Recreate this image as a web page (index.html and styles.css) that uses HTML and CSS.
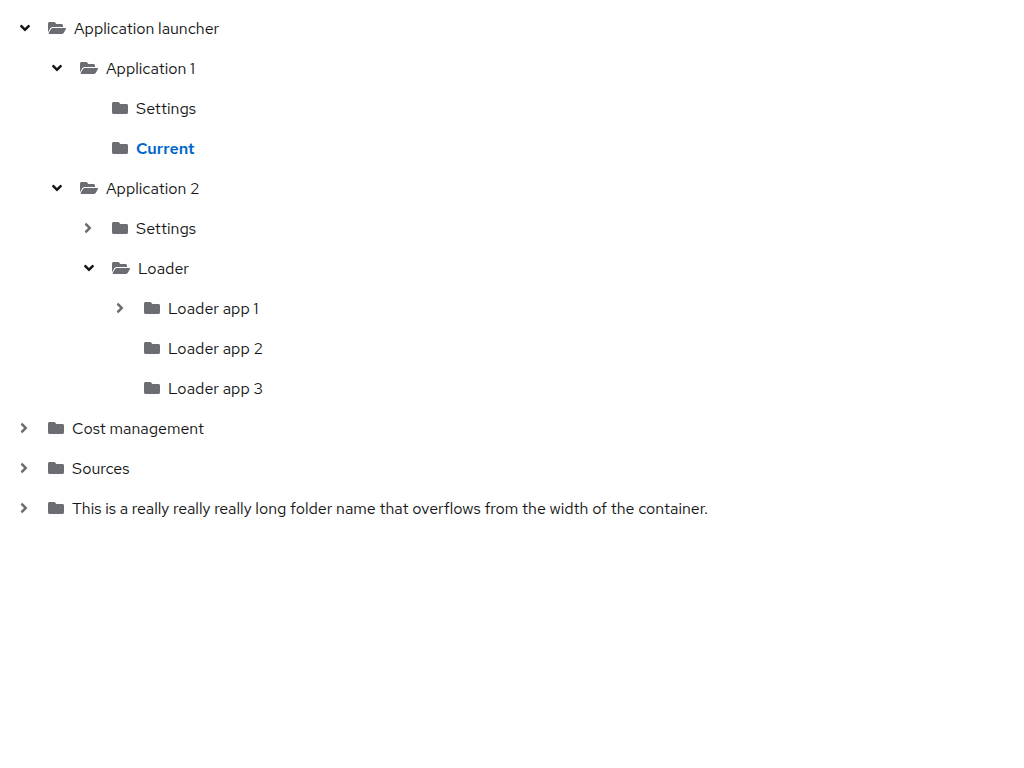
FILE: index.html
```html
<!DOCTYPE html>
<html lang="en">
<head>
<meta charset="utf-8">
<meta name="viewport" content="width=device-width, initial-scale=1">
<title>Tree view</title>
<link rel="stylesheet" href="styles.css">
</head>
<body>
<svg class="sprite" aria-hidden="true">
  <symbol id="right" viewBox="0 0 256 512"><path d="M224.3 273l-136 136c-9.400 9.400-24.600 9.400-33.900 0l-22.600-22.600c-9.400-9.400-9.400-24.600 0-33.900l96.400-96.400-96.400-96.400c-9.400-9.400-9.400-24.600 0-33.900L54.300 103c9.400-9.400 24.600-9.400 33.900 0l136 136c9.500 9.400 9.500 24.600.1 34z"/></symbol>
  <symbol id="down" viewBox="0 0 320 512"><path d="M143 352.300L7 216.300c-9.400-9.400-9.400-24.600 0-33.900l22.600-22.600c9.400-9.400 24.600-9.400 33.900 0l96.400 96.400 96.400-96.400c9.400-9.400 24.600-9.400 33.900 0l22.600 22.600c9.400 9.400 9.400 24.600 0 33.900l-136 136c-9.200 9.400-24.400 9.400-33.800 0z"/></symbol>
  <symbol id="folder" viewBox="0 0 512 512"><path d="M464 128H272l-64-64H48C21.490 64 0 85.490 0 112v288c0 26.510 21.490 48 48 48h416c26.510 0 48-21.490 48-48V176c0-26.510-21.490-48-48-48z"/></symbol>
  <symbol id="open" viewBox="0 0 576 512"><path d="M572.694 292.093L500.270 416.248A63.997 63.997 0 0 1 444.989 448H45.025c-18.523 0-30.064-20.093-20.731-36.093l72.424-124.155A64 64 0 0 1 152 256h399.964c18.523 0 30.064 20.093 20.730 36.093zM152 224h328v-48c0-26.510-21.490-48-48-48H272l-64-64H48C21.490 64 0 85.490 0 112v278.046l69.077-118.418C86.214 242.250 117.989 224 152 224z"/></symbol>
</svg>
<main>
<ul class="tree" role="tree" aria-label="Folders">
  <li role="treeitem" aria-expanded="true">
    <button class="node"><span class="toggle open"><svg class="down"><use href="#down"/></svg></span><svg class="wide"><use href="#open"/></svg><span class="label">Application launcher</span></button>
    <ul role="group">
      <li role="treeitem" aria-expanded="true">
        <button class="node"><span class="toggle open"><svg class="down"><use href="#down"/></svg></span><svg class="wide"><use href="#open"/></svg><span class="label">Application 1</span></button>
        <ul role="group">
          <li role="treeitem"><button class="node"><span class="toggle"></span><svg class="folder"><use href="#folder"/></svg><span class="label">Settings</span></button></li>
          <li role="treeitem" aria-selected="true"><button class="node current"><span class="toggle"></span><svg class="folder"><use href="#folder"/></svg><span class="label">Current</span></button></li>
        </ul>
      </li>
      <li role="treeitem" aria-expanded="true">
        <button class="node"><span class="toggle open"><svg class="down"><use href="#down"/></svg></span><svg class="wide"><use href="#open"/></svg><span class="label">Application 2</span></button>
        <ul role="group">
          <li role="treeitem" aria-expanded="false"><button class="node"><span class="toggle"><svg class="right"><use href="#right"/></svg></span><svg class="folder"><use href="#folder"/></svg><span class="label">Settings</span></button></li>
          <li role="treeitem" aria-expanded="true">
            <button class="node"><span class="toggle open"><svg class="down"><use href="#down"/></svg></span><svg class="wide"><use href="#open"/></svg><span class="label">Loader</span></button>
            <ul role="group">
              <li role="treeitem" aria-expanded="false"><button class="node"><span class="toggle"><svg class="right"><use href="#right"/></svg></span><svg class="folder"><use href="#folder"/></svg><span class="label">Loader app 1</span></button></li>
              <li role="treeitem"><button class="node"><span class="toggle"></span><svg class="folder"><use href="#folder"/></svg><span class="label">Loader app 2</span></button></li>
              <li role="treeitem"><button class="node"><span class="toggle"></span><svg class="folder"><use href="#folder"/></svg><span class="label">Loader app 3</span></button></li>
            </ul>
          </li>
        </ul>
      </li>
    </ul>
  </li>
  <li role="treeitem" aria-expanded="false"><button class="node"><span class="toggle"><svg class="right"><use href="#right"/></svg></span><svg class="folder"><use href="#folder"/></svg><span class="label">Cost management</span></button></li>
  <li role="treeitem" aria-expanded="false"><button class="node"><span class="toggle"><svg class="right"><use href="#right"/></svg></span><svg class="folder"><use href="#folder"/></svg><span class="label">Sources</span></button></li>
  <li role="treeitem" aria-expanded="false"><button class="node"><span class="toggle"><svg class="right"><use href="#right"/></svg></span><svg class="folder"><use href="#folder"/></svg><span class="label">This is a really really really long folder name that overflows from the width of the container.</span></button></li>
</ul>
</main>
</body>
</html>
```

FILE: styles.css
```css
* { box-sizing: border-box; }
body { margin: 0; background: #fff; color: #151515; font: 16px/22px "Red Hat Text", Lato, sans-serif; }
.sprite { display: none; }
ul { margin: 0; padding: 0; list-style: none; }
.tree { padding: 8px 0; }
.tree ul { padding-left: 32px; }
.node { display: flex; align-items: center; width: 100%; padding: 8px 8px 8px 20px; border: 0; background: none; color: inherit; font: inherit; text-align: left; cursor: pointer; }
.node svg { flex: none; height: 16px; fill: currentColor; color: #6a6e73; }
.toggle { display: flex; flex: none; width: 28px; }
.node .open svg { color: #151515; }
.right { width: 8px; }
.down { width: 10px; }
.folder { width: 16px; }
.wide { width: 18px; }
.label { margin-left: 8px; padding-top: 2px; }
.current { color: #06c; font-weight: 600; }
```
